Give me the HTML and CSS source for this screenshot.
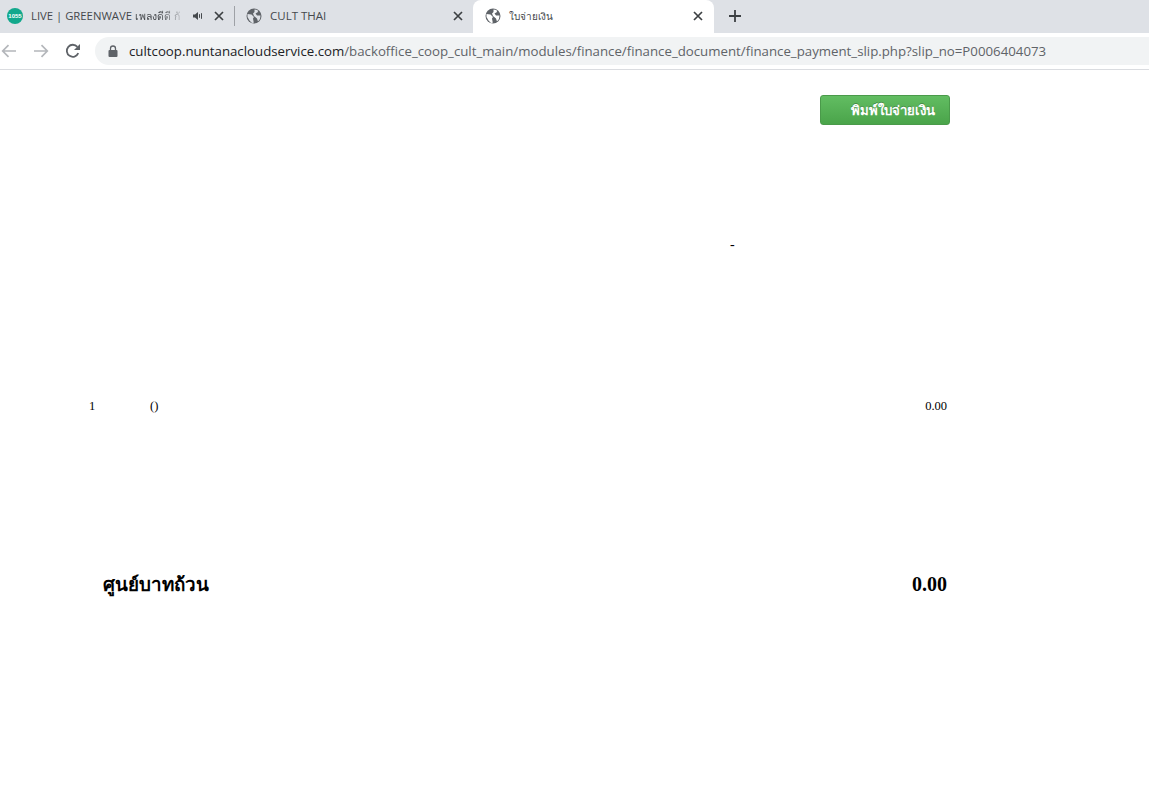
FILE: index.html
```html
<!DOCTYPE html>
<html lang="th">
<head>
<meta charset="utf-8">
<title>ใบจ่ายเงิน</title>
<link rel="stylesheet" href="styles.css">
</head>
<body>
<header class="browser">
  <div class="tabstrip">
    <div class="tab tab-first">
      <span class="favicon-live">1055</span>
      <span class="tab-title title-live">LIVE | GREENWAVE <span class="title-live-thai">เพลงดีดี กั</span></span>
      <svg class="speaker" width="12" height="12" viewBox="0 0 12 12"><path d="M1 4.500h2L6 2v8L3 7.500H1z" fill="#45494d"/><path d="M7.500 4.200v3.600M9.500 3.200v5.600" stroke="#45494d" stroke-width="1" fill="none"/></svg>
      <svg class="close" width="10" height="10" viewBox="0 0 10 10"><path d="M1 1l8 8M9 1l-8 8" stroke="#3c4043" stroke-width="1.700"/></svg>
    </div>
    <span class="tab-sep"></span>
    <div class="tab tab-second">
      <svg class="globe" width="16" height="16" viewBox="0 0 16 16"><circle cx="8" cy="8" r="7.500" fill="#5f6368"/><path d="M1.500 6l4 .5 2.500 2.500-1 1.500.8 4.300L6 15 3.500 12.500 1.500 9zM8.500 1.500l3 .5.500 2-2.500 1.500L11 7.500h3.500L14 11l-2 2.500-1-3-3-2.500-1-2.500 1.500-1.500z" fill="#dee1e6"/></svg>
      <span class="tab-title">CULT THAI</span>
      <svg class="close" width="10" height="10" viewBox="0 0 10 10"><path d="M1 1l8 8M9 1l-8 8" stroke="#3c4043" stroke-width="1.700"/></svg>
    </div>
    <div class="tab tab-active">
      <svg class="globe" width="16" height="16" viewBox="0 0 16 16"><circle cx="8" cy="8" r="7.500" fill="#5f6368"/><path d="M1.500 6l4 .5 2.500 2.500-1 1.500.8 4.300L6 15 3.500 12.500 1.500 9zM8.500 1.500l3 .5.500 2-2.500 1.500L11 7.500h3.500L14 11l-2 2.500-1-3-3-2.500-1-2.500 1.500-1.500z" fill="#fff"/></svg>
      <span class="tab-title title-thai">ใบจ่ายเงิน</span>
      <svg class="close" width="10" height="10" viewBox="0 0 10 10"><path d="M1 1l8 8M9 1l-8 8" stroke="#3c4043" stroke-width="1.700"/></svg>
    </div>
    <svg class="new-tab" width="12" height="12" viewBox="0 0 12 12"><path d="M6 0v12M0 6h12" stroke="#3c4043" stroke-width="1.800"/></svg>
  </div>
  <div class="toolbar">
    <svg class="nav-icon nav-back" width="16" height="14" viewBox="0 0 16 14"><path d="M15 7H2M7.500 1.200L1.700 7l5.800 5.800" stroke="#b4b7bb" stroke-width="1.700" fill="none"/></svg>
    <svg class="nav-icon nav-forward" width="16" height="14" viewBox="0 0 16 14"><path d="M1 7h13M8.500 1.200L14.300 7l-5.800 5.800" stroke="#b4b7bb" stroke-width="1.700" fill="none"/></svg>
    <svg class="nav-icon nav-reload" width="16" height="16" viewBox="0 0 16 16"><path d="M13.300 10.200A6 6 0 1 1 12.400 3.900" stroke="#5f6368" stroke-width="1.800" fill="none"/><path d="M15 1v6H9z" fill="#5f6368"/></svg>
    <div class="omnibox">
      <svg class="lock" width="10" height="12" viewBox="0 0 10 12"><path d="M2.500 5V3.500a2.500 2.500 0 0 1 5 0V5" stroke="#5f6368" stroke-width="1.300" fill="none"/><rect x="0.500" y="5" width="9" height="7" rx="1" fill="#5f6368"/></svg>
      <span class="url"><span class="url-host">cultcoop.nuntanacloudservice.com</span>/backoffice_coop_cult_main/modules/finance/finance_document/finance_payment_slip.php?slip_no=P0006404073</span>
    </div>
  </div>
</header>
<main class="page">
  <div class="print-row"><button class="print-btn" type="button">พิมพ์ใบจ่ายเงิน</button></div>
  <div class="dash-row">-</div>
  <div class="item-row">
    <span class="item-no">1</span>
    <span class="item-name">()</span>
    <span class="item-amount">0.00</span>
  </div>
  <div class="total-row">
    <span class="total-words">ศูนย์บาทถ้วน</span>
    <span>0.00</span>
  </div>
</main>
</body>
</html>
```
FILE: styles.css
```css
html, body { margin: 0; padding: 0; background: #fff; }
body { width: 1149px; height: 810px; overflow: hidden; font-family: "Liberation Serif", "Noto Sans CJK SC", serif; color: #000; }

.browser { font-family: "Open Sans", "Noto Sans", sans-serif; }
.tabstrip { display: flex; align-items: flex-start; height: 33px; background: #dee1e6; }
.tab { display: flex; align-items: center; height: 32px; box-sizing: border-box; }
.tab-first { width: 234px; padding-left: 7px; }
.tab-second { width: 238px; padding-left: 12px; }
.tab-active { width: 241px; height: 33px; padding: 0 0 1px 13px; background: #fff; border-radius: 8px 8px 0 0; }
.tab-sep { width: 1px; height: 20px; margin-top: 6px; background: #9ea1a6; }
.favicon-live { display: flex; align-items: center; justify-content: center; width: 16px; height: 16px; border-radius: 50%; background: #12a88c; color: #fff; font: bold 6px "Liberation Sans", sans-serif; flex: none; }
.tab-title { font-size: 11.500px; line-height: 14px; margin-top: -1px; color: #45484c; white-space: nowrap; margin-left: 8px; flex: 1; }
.title-live { font-size: 11.300px; }
.title-live-thai { font-size: 10.500px; -webkit-mask-image: linear-gradient(90deg, #000 55%, rgba(0,0,0,.25) 100%); mask-image: linear-gradient(90deg, #000 55%, rgba(0,0,0,.25) 100%); display: inline-block; }
.title-thai { font-size: 10px; }
.speaker { flex: none; margin-right: 10px; }
.close { flex: none; margin-right: 10px; }
.globe { flex: none; margin-left: -1px; }
.tab-active .close { margin-right: 11px; }
.new-tab { margin: 10px 0 0 15px; }

.toolbar { display: flex; align-items: center; height: 36px; border-bottom: 1px solid #dadce0; }
.nav-icon { flex: none; }
.nav-back { margin-left: 1px; }
.nav-forward { margin-left: 16px; }
.nav-reload { margin-left: 16px; }
.omnibox { display: flex; align-items: center; flex: 1; height: 28px; margin-left: 14px; padding-left: 13px; background: #f1f3f4; border-radius: 14px 0 0 14px; min-width: 0; overflow: hidden; }
.lock { flex: none; }
.url { margin-left: 11px; font-size: 13.250px; color: #5f6368; white-space: nowrap; }
.url-host { color: #202124; }

.page { width: 1149px; }
.print-row { display: flex; justify-content: flex-end; padding: 25px 199px 0 0; }
.print-btn { width: 130px; height: 30px; padding: 0 12px 0 30px; border: 1px solid #4a9a4a; border-radius: 3px; background: linear-gradient(#62bd62, #4aa44a); color: #fff; font: bold 13.200px "Liberation Sans", "Noto Sans CJK SC", sans-serif; text-align: left; text-shadow: 0 -1px 0 rgba(0,0,0,.25); white-space: nowrap; }
.dash-row { margin-top: 112px; padding-left: 730px; font-size: 14px; line-height: 16px; height: 16px; }
.item-row { display: flex; margin-top: 146px; font-size: 12.500px; line-height: 14px; padding: 0 202px 0 89px; }
.item-no { width: 61px; }
.item-name { flex: 1; }
.total-row { display: flex; justify-content: space-between; align-items: center; margin-top: 160px; padding: 0 202px 0 103px; font-size: 20px; font-weight: bold; line-height: 23px; }
.total-words { font-size: 18.750px; }
```
